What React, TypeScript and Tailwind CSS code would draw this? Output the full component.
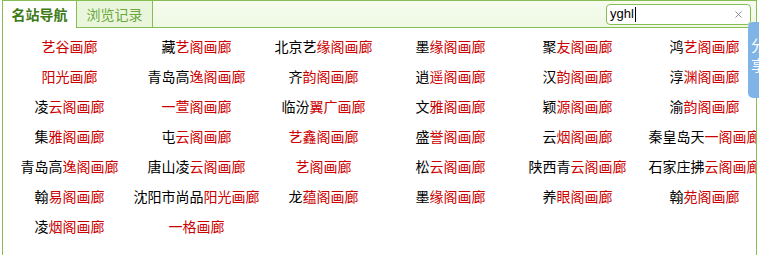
import { X } from "lucide-react";

type Site = [string, string];

const rows: Site[][] = [
  [["", "艺谷画廊"], ["藏", "艺阁画廊"], ["北京艺", "缘阁画廊"], ["墨", "缘阁画廊"], ["聚", "友阁画廊"], ["鸿", "艺阁画廊"]],
  [["", "阳光画廊"], ["青岛高", "逸阁画廊"], ["齐", "韵阁画廊"], ["逍", "遥阁画廊"], ["汉", "韵阁画廊"], ["淳", "渊阁画廊"]],
  [["凌", "云阁画廊"], ["", "一萱阁画廊"], ["临汾", "翼广画廊"], ["文", "雅阁画廊"], ["颖", "源阁画廊"], ["渝", "韵阁画廊"]],
  [["集", "雅阁画廊"], ["屯", "云阁画廊"], ["", "艺鑫阁画廊"], ["盛", "誉阁画廊"], ["云", "烟阁画廊"], ["秦皇岛天", "一阁画廊"]],
  [["青岛高", "逸阁画廊"], ["唐山凌", "云阁画廊"], ["", "艺阁画廊"], ["松", "云阁画廊"], ["陕西青", "云阁画廊"], ["石家庄拂", "云阁画廊"]],
  [["翰", "易阁画廊"], ["沈阳市尚品", "阳光画廊"], ["龙", "蕴阁画廊"], ["墨", "缘阁画廊"], ["养", "眼阁画廊"], ["翰", "苑阁画廊"]],
  [["凌", "烟阁画廊"], ["", "一格画廊"]],
];

export default function App() {
  return (
    <div className="relative h-[255px] w-[759px] overflow-hidden bg-white font-['Noto_Sans_CJK_SC',sans-serif] text-[14px]">
      <div className="mx-[2px] h-[300px] overflow-hidden border border-[#86bd55]">
        <div className="flex h-[27px] items-stretch border-b border-[#86bd55] bg-gradient-to-b from-[#f7fcef] to-[#eef8e2]">
          <div className="-mb-px flex w-[74px] items-center justify-center border-r border-[#86bd55] bg-white font-bold text-[#3d7a16]">名站导航</div>
          <div className="flex w-[76px] items-center justify-center border-r border-[#86bd55] bg-[#eaf6dc] text-[#6aa83c]">浏览记录</div>
          <div className="flex flex-1 items-center justify-end pr-[5px]">
            <div className="flex h-[21px] w-[145px] items-center rounded-[4px] border border-[#86bd55] bg-white pl-[3px] pr-[6px] font-['Liberation_Sans',sans-serif] text-[13px] text-black">
              <span>yghl</span>
              <span className="ml-px h-[15px] w-px bg-black" />
              <X className="ml-auto h-[11px] w-[11px] text-[#667]" strokeWidth={1.6} />
            </div>
          </div>
        </div>
        <div className="pt-[3px] pl-[3px]">
          {rows.map((row, i) => (
            <div key={i} className="grid grid-cols-[repeat(6,127px)] leading-[30px]">
              {row.map(([black, red], j) => (
                <a key={j} className="whitespace-nowrap text-center">
                  <span className="text-black">{black}</span>
                  <span className="text-[#cc0000]">{red}</span>
                </a>
              ))}
            </div>
          ))}
        </div>
      </div>
      <div className="absolute top-[22px] left-[748px] flex h-[76px] w-[20px] flex-col items-start gap-[2px] rounded-l-[5px] bg-[#80b4e6] pt-[14px] pl-[3px] text-[15px] leading-[18px] text-white">
        <span>分</span>
        <span>享</span>
      </div>
    </div>
  );
}
